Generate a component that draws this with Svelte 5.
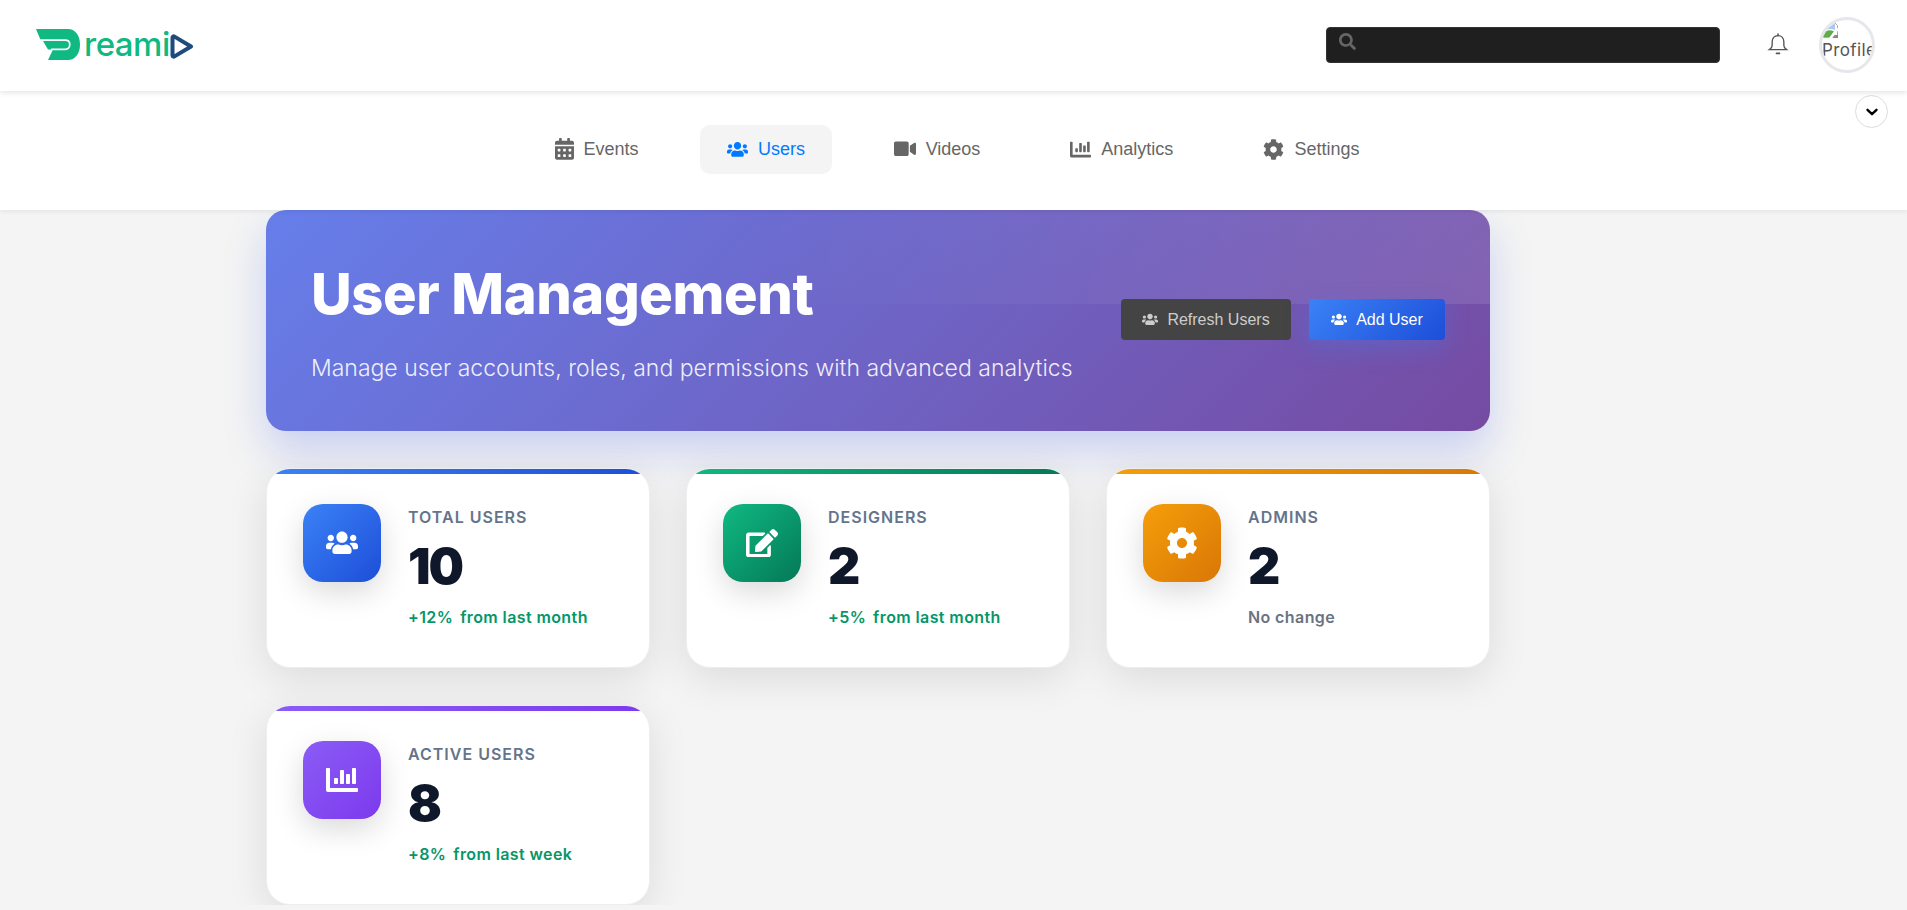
<script>
  const paths = {
    users: "M96 224c35.3 0 64-28.7 64-64s-28.7-64-64-64-64 28.7-64 64 28.7 64 64 64zm448 0c35.3 0 64-28.7 64-64s-28.7-64-64-64-64 28.7-64 64 28.7 64 64 64zm32 32h-64c-17.6 0-33.5 7.1-45.1 18.6 40.3 22.1 68.9 62 75.1 109.4h66c17.7 0 32-14.3 32-32v-32c0-35.3-28.7-64-64-64zm-256 0c61.9 0 112-50.1 112-112S381.9 32 320 32 208 82.1 208 144s50.1 112 112 112zm76.8 32h-8.3c-20.8 10-43.9 16-68.5 16s-47.6-6-68.5-16h-8.3C179.6 288 128 339.6 128 403.2V432c0 26.5 21.5 48 48 48h288c26.5 0 48-21.5 48-48v-28.8c0-63.6-51.6-115.2-115.2-115.2zm-223.7-13.4C161.5 263.1 145.6 256 128 256H64c-35.3 0-64 28.7-64 64v32c0 17.7 14.3 32 32 32h65.9c6.3-47.4 34.9-87.3 75.2-109.4z",
    calendar: "M0 464c0 26.5 21.5 48 48 48h352c26.5 0 48-21.5 48-48V192H0v272zm320-196c0-6.6 5.4-12 12-12h40c6.6 0 12 5.4 12 12v40c0 6.6-5.4 12-12 12h-40c-6.6 0-12-5.4-12-12v-40zm0 128c0-6.6 5.4-12 12-12h40c6.6 0 12 5.4 12 12v40c0 6.6-5.4 12-12 12h-40c-6.6 0-12-5.4-12-12v-40zM192 268c0-6.6 5.4-12 12-12h40c6.6 0 12 5.4 12 12v40c0 6.6-5.4 12-12 12h-40c-6.6 0-12-5.4-12-12v-40zm0 128c0-6.6 5.4-12 12-12h40c6.6 0 12 5.4 12 12v40c0 6.6-5.4 12-12 12h-40c-6.6 0-12-5.4-12-12v-40zM64 268c0-6.6 5.4-12 12-12h40c6.6 0 12 5.4 12 12v40c0 6.6-5.4 12-12 12H76c-6.6 0-12-5.4-12-12v-40zm0 128c0-6.6 5.4-12 12-12h40c6.6 0 12 5.4 12 12v40c0 6.6-5.4 12-12 12H76c-6.6 0-12-5.4-12-12v-40zM400 64h-48V16c0-8.8-7.2-16-16-16h-32c-8.8 0-16 7.2-16 16v48H160V16c0-8.8-7.2-16-16-16h-32c-8.8 0-16 7.2-16 16v48H48C21.5 64 0 85.5 0 112v48h448v-48c0-26.5-21.5-48-48-48z",
    video: "M336.2 64H47.8C21.4 64 0 85.4 0 111.8v288.4C0 426.6 21.4 448 47.8 448h288.4c26.4 0 47.8-21.4 47.8-47.8V111.8c0-26.4-21.4-47.8-47.8-47.8zm189.4 37.7L416 177.3v157.4l109.6 75.5c21.2 14.6 50.4-.3 50.4-25.8V127.5c0-25.4-29.1-40.4-50.4-25.8z",
    chart: "M332.8 320h38.4c6.4 0 12.8-6.4 12.8-12.8V172.8c0-6.4-6.4-12.8-12.8-12.8h-38.4c-6.4 0-12.8 6.4-12.8 12.8v134.4c0 6.4 6.4 12.8 12.8 12.8zm96 0h38.4c6.4 0 12.8-6.4 12.8-12.8V76.8c0-6.4-6.4-12.8-12.8-12.8h-38.4c-6.4 0-12.8 6.4-12.8 12.8v230.4c0 6.4 6.4 12.8 12.8 12.8zm-288 0h38.4c6.4 0 12.8-6.4 12.8-12.8v-70.4c0-6.4-6.4-12.8-12.8-12.8h-38.4c-6.4 0-12.8 6.4-12.8 12.8v70.4c0 6.4 6.4 12.8 12.8 12.8zm96 0h38.4c6.4 0 12.8-6.4 12.8-12.8V108.8c0-6.4-6.4-12.8-12.8-12.8h-38.4c-6.4 0-12.8 6.4-12.8 12.8v198.4c0 6.4 6.4 12.8 12.8 12.8zM496 384H64V80c0-8.84-7.16-16-16-16H16C7.16 64 0 71.16 0 80v336c0 17.67 14.33 32 32 32h464c8.84 0 16-7.16 16-16v-32c0-8.84-7.16-16-16-16z",
    cog: "M487.4 315.7l-42.6-24.6c4.3-23.2 4.3-47 0-70.2l42.6-24.6c4.9-2.8 7.1-8.6 5.5-14-11.1-35.6-30-67.8-54.7-94.6-3.8-4.1-10-5.1-14.8-2.3L380.8 110c-17.9-15.4-38.5-27.3-60.8-35.1V25.8c0-5.6-3.9-10.5-9.4-11.7-36.7-8.2-74.3-7.8-109.2 0-5.5 1.2-9.4 6.1-9.4 11.7V75c-22.2 7.9-42.8 19.8-60.8 35.1L88.7 85.5c-4.9-2.8-11-1.9-14.8 2.3-24.7 26.7-43.6 58.9-54.7 94.6-1.7 5.4.6 11.2 5.5 14L67.3 221c-4.3 23.2-4.3 47 0 70.2l-42.6 24.6c-4.9 2.8-7.1 8.6-5.5 14 11.1 35.6 30 67.8 54.7 94.6 3.8 4.1 10 5.1 14.8 2.3l42.6-24.6c17.9 15.4 38.5 27.3 60.8 35.1v49.2c0 5.6 3.9 10.5 9.4 11.7 36.7 8.2 74.3 7.8 109.2 0 5.5-1.2 9.4-6.1 9.4-11.7v-49.2c22.2-7.9 42.8-19.8 60.8-35.1l42.6 24.6c4.9 2.8 11 1.9 14.8-2.3 24.7-26.7 43.6-58.9 54.7-94.6 1.5-5.5-.7-11.3-5.6-14.1zM256 336c-44.1 0-80-35.9-80-80s35.9-80 80-80 80 35.9 80 80-35.9 80-80 80z",
    edit: "M402.6 83.2l90.2 90.2c3.8 3.8 3.8 10 0 13.8L274.4 405.6l-92.8 10.3c-12.4 1.4-22.9-9.1-21.5-21.5l10.3-92.8L388.8 83.2c3.8-3.8 10-3.8 13.8 0zm162-22.9l-48.8-48.8c-15.2-15.2-39.9-15.2-55.2 0l-35.4 35.4c-3.8 3.8-3.8 10 0 13.8l90.2 90.2c3.8 3.8 10 3.8 13.8 0l35.4-35.4c15.2-15.3 15.2-40 0-55.2zM384 346.2V448H64V128h229.8c3.2 0 6.2-1.3 8.5-3.5l40-40c7.6-7.6 2.2-20.5-8.5-20.5H48C21.5 64 0 85.5 0 112v352c0 26.5 21.5 48 48 48h352c26.5 0 48-21.5 48-48V306.2c0-10.7-12.9-16-20.5-8.5l-40 40c-2.2 2.3-3.5 5.3-3.5 8.5z",
    search: "M505 442.7L405.3 343c-4.5-4.5-10.6-7-17-7H372c27.6-35.3 44-79.7 44-128C416 93.1 322.9 0 208 0S0 93.1 0 208s93.1 208 208 208c48.3 0 92.7-16.4 128-44v16.3c0 6.4 2.5 12.5 7 17l99.7 99.7c9.4 9.4 24.6 9.4 33.9 0l28.3-28.3c9.4-9.4 9.4-24.6.1-34zM208 336c-70.7 0-128-57.2-128-128 0-70.7 57.2-128 128-128 70.7 0 128 57.2 128 128 0 70.7-57.2 128-128 128z"
  };
  const boxes = { users: "0 0 640 512", calendar: "0 0 448 512", video: "0 0 576 512", chart: "0 0 512 512", cog: "0 0 512 512", edit: "0 0 576 512", search: "0 0 512 512" };

  const tabs = [
    { label: "Events", icon: "calendar", w: 19 },
    { label: "Users", icon: "users", w: 21, active: true },
    { label: "Videos", icon: "video", w: 22 },
    { label: "Analytics", icon: "chart", w: 21 },
    { label: "Settings", icon: "cog", w: 21 }
  ];

  const stats = [
    { label: "TOTAL USERS", value: "10", up: "+12%", note: "from last month", icon: "users", tone: "blue" },
    { label: "DESIGNERS", value: "2", up: "+5%", note: "from last month", icon: "edit", tone: "green" },
    { label: "ADMINS", value: "2", note: "No change", icon: "cog", tone: "orange" },
    { label: "ACTIVE USERS", value: "8", up: "+8%", note: "from last week", icon: "chart", tone: "purple" }
  ];
</script>

{#snippet icon(name, width)}
  <svg class="fa" {width} viewBox={boxes[name]} fill="currentColor" aria-hidden="true"><path d={paths[name]} /></svg>
{/snippet}

<header class="topbar">
  <div class="logo">
    <svg class="mark" width="44" height="31" viewBox="0 0 44 31" aria-hidden="true">
      <path fill="#0fb981" d="M0 0H32C39 0 44 6 44 15.500C44 25 39 31 32 31H12L17 20.500H12L7 12H5Z" />
      <path fill="none" stroke="#fff" stroke-width="1.700" d="M3 11.200H29C32.500 11.200 33.800 13.200 33.800 15.500C33.800 18.500 31.500 20.300 29 20.300H15" />
    </svg>
    <span class="logo-text">reami</span>
    <svg class="play" width="24" height="25" viewBox="0 0 24 25" aria-hidden="true">
      <path fill="none" stroke="#1f4a7c" stroke-width="4" stroke-linejoin="round" d="M2.500 3.500C2.500 2.500 3.500 2 4.500 2.600L21 12.500L4.500 22.400C3.500 23 2.500 22.500 2.500 21.500Z" />
    </svg>
  </div>
  <div class="top-right">
    <div class="search">
      <span class="search-icon">{@render icon("search", 17)}</span>
    </div>
    <svg class="bell" width="22" height="23" viewBox="0 0 20 22" fill="none" stroke="#555" stroke-width="1.300" aria-hidden="true">
      <path d="M10 2.500c-3.600 0-5.600 2.600-5.600 6v3.400c0 1.600-1.200 3-2.600 4h16.400c-1.400-1-2.600-2.400-2.600-4V8.500c0-3.400-2-6-5.600-6z" />
      <path d="M10 1v1.500M8.500 19.500h3" stroke-linecap="round" stroke-width="1.500" />
    </svg>
    <div class="avatar">
      <svg class="broken" width="17" height="16" viewBox="0 0 17 16" aria-hidden="true">
        <path fill="#fff" stroke="#a8a8a8" d="M1.500 15V5L7.500 1H13L15.500 3.500V15Z" />
        <path fill="#a9c9ee" d="M1 11V5.500L7.500 1.500H13V8C8.500 6 4 7 1 11Z" />
        <path fill="#62ab4b" d="M1 15.500V12C4 8 8.500 7.500 12 9.500L8 15.500Z" />
        <path fill="#fff" d="M7 16L15 5.500L17 7.500L10 16Z" />
        <path fill="#8a8a8a" d="M12.500 13H16V16H10.500Z" />
      </svg>
      <span class="alt">Profile</span>
    </div>
  </div>
</header>

<nav class="tabs">
  {#each tabs as tab}
    <button class="tab" class:active={tab.active}>
      {@render icon(tab.icon, tab.w)}
      <span>{tab.label}</span>
    </button>
  {/each}
  <button class="collapse" aria-label="Collapse">
    <svg width="14" height="14" viewBox="0 0 14 14" fill="none" stroke="#000" stroke-width="2.400" stroke-linecap="round" stroke-linejoin="round"><path d="M2.500 4.800L7 9.200L11.500 4.800" /></svg>
  </button>
</nav>

<main class="page">
  <section class="hero">
    <div class="hero-copy">
      <h1>User Management</h1>
      <p>Manage user accounts, roles, and permissions with advanced analytics</p>
    </div>
    <div class="hero-actions">
      <button class="btn dark">{@render icon("users", 16)}<span>Refresh Users</span></button>
      <button class="btn primary">{@render icon("users", 16)}<span>Add User</span></button>
    </div>
  </section>

  <section class="stats">
    {#each stats as s}
      <article class="card {s.tone}">
        <div class="card-icon">{@render icon(s.icon, 32)}</div>
        <div class="card-body">
          <div class="card-label">{s.label}</div>
          <div class="card-value">{s.value}</div>
          {#if s.up}
            <div class="card-note up"><span>{s.up}</span><span>{s.note}</span></div>
          {:else}
            <div class="card-note">{s.note}</div>
          {/if}
        </div>
      </article>
    {/each}
  </section>
</main>

<style>
  :global(body) {
    background: #f4f4f4;
    font-family: "Liberation Sans", Arial, sans-serif;
  }
  :global(html), :global(body) {
    overflow: hidden;
  }
  .fa {
    display: block;
    flex: none;
  }
  button {
    font-family: inherit;
    border: none;
    cursor: pointer;
  }

  .topbar {
    position: relative;
    z-index: 2;
    height: 91px;
    box-sizing: border-box;
    background: #fff;
    box-shadow: 0 2px 5px rgba(0, 0, 0, 0.1);
    display: flex;
    align-items: center;
    justify-content: space-between;
    padding: 0 32px 2px 36px;
  }
  .logo {
    display: flex;
    align-items: flex-end;
    height: 31px;
  }
  .logo-text {
    font-family: "Inter", sans-serif;
    font-size: 33px;
    line-height: 31px;
    font-weight: 500;
    color: #0fb981;
    letter-spacing: -0.5px;
    margin-left: 4px;
  }
  .play {
    margin: 0 0 1px 0;
  }
  .top-right {
    display: flex;
    align-items: center;
  }
  .search {
    width: 394px;
    height: 36px;
    box-sizing: border-box;
    background: #1f1f1f;
    border: 1px solid #333;
    border-radius: 4px;
    margin-right: 47px;
    padding: 5px 0 0 12px;
  }
  .search-icon {
    display: block;
    color: #666;
  }
  .bell {
    margin-right: 30px;
  }
  .avatar {
    width: 56px;
    height: 56px;
    box-sizing: border-box;
    border: 3px solid #e5e7eb;
    border-radius: 50%;
    overflow: hidden;
    color: #555;
    font-family: "Inter", sans-serif;
    font-size: 17px;
    line-height: 24px;
    letter-spacing: 0.4px;
    white-space: nowrap;
  }
  .broken {
    display: block;
    margin-top: 2px;
  }
  .alt {
    display: block;
  }

  .tabs {
    position: relative;
    z-index: 1;
    height: 119px;
    box-sizing: border-box;
    background: #fff;
    box-shadow: 0 2px 4px rgba(0, 0, 0, 0.06);
    display: flex;
    align-items: center;
    justify-content: center;
    gap: 36px;
    padding: 0 0 3px 7px;
  }
  .tab {
    height: 49px;
    padding: 0 27px;
    border-radius: 10px;
    background: transparent;
    color: #666;
    font-size: 18px;
    display: flex;
    align-items: center;
    gap: 10px;
  }
  .tab.active {
    margin: 0 -1.500px;
    background: #f4f4f4;
    color: #007bff;
  }
  .collapse {
    position: absolute;
    top: 4px;
    right: 19px;
    width: 33px;
    height: 33px;
    padding: 0;
    border: 1px solid #ddd;
    border-radius: 50%;
    background: #fff;
    display: flex;
    align-items: center;
    justify-content: center;
  }

  .page {
    width: 1224px;
    margin-left: 266px;
  }
  .hero {
    position: relative;
    overflow: hidden;
    height: 221px;
    border-radius: 20px;
    background: linear-gradient(135deg, #667eea 0%, #764ba2 100%);
    box-shadow: 0 20px 40px rgba(102, 126, 234, 0.3);
    display: flex;
    align-items: center;
    justify-content: space-between;
    padding: 0 45px;
    box-sizing: border-box;
  }
  .hero::before {
    content: "";
    position: absolute;
    inset: 0 0 auto 0;
    height: 94px;
    background: linear-gradient(90deg, rgba(255, 255, 255, 0) 40%, rgba(255, 255, 255, 0.1) 100%);
  }
  .hero-copy, .hero-actions {
    position: relative;
  }
  h1 {
    margin: 0 0 22px;
    font-family: "Inter", sans-serif;
    font-size: 56px;
    line-height: 72px;
    font-weight: 800;
    letter-spacing: -0.4px;
    color: #fff;
  }
  .hero-copy p {
    margin: 0;
    font-family: "Inter", sans-serif;
    font-size: 23px;
    line-height: 32px;
    font-weight: 300;
    color: rgba(255, 255, 255, 0.9);
  }
  .hero-actions {
    display: flex;
    gap: 18px;
    margin-bottom: 2px;
  }
  .btn {
    height: 41px;
    border-radius: 4px;
    font-size: 16px;
    display: flex;
    align-items: center;
    justify-content: center;
    gap: 9px;
    padding: 0;
  }
  .btn.dark {
    width: 170px;
    background: #444;
    color: #ccc;
  }
  .btn.primary {
    width: 136px;
    background: linear-gradient(135deg, #3b82f6, #1d4ed8);
    color: #fff;
    box-shadow: 0 8px 24px rgba(59, 130, 246, 0.3);
  }

  .stats {
    margin-top: 37px;
    display: grid;
    grid-template-columns: repeat(3, 1fr);
    gap: 37px 36px;
  }
  .card {
    position: relative;
    overflow: hidden;
    height: 200px;
    box-sizing: border-box;
    background: #fff;
    border: 1px solid #eceef2;
    border-radius: 24px;
    box-shadow: 0 10px 40px rgba(0, 0, 0, 0.1);
    padding: 35px 36px;
    display: flex;
    gap: 27px;
  }
  .card::before {
    content: "";
    position: absolute;
    inset: 0 0 auto 0;
    height: 5px;
    background: var(--tone);
  }
  .blue { --tone: linear-gradient(135deg, #3b82f6, #1d4ed8); }
  .green { --tone: linear-gradient(135deg, #10b981, #047857); }
  .orange { --tone: linear-gradient(135deg, #f59e0b, #d97706); }
  .purple { --tone: linear-gradient(135deg, #8b5cf6, #7c3aed); }
  .card-icon {
    width: 78px;
    height: 78px;
    flex: none;
    border-radius: 20px;
    background: var(--tone);
    color: #fff;
    display: flex;
    align-items: center;
    justify-content: center;
    box-shadow: 0 10px 30px rgba(0, 0, 0, 0.15);
  }
  .card-body {
    font-family: "Inter", sans-serif;
    padding-top: 2px;
  }
  .card-label {
    font-size: 16px;
    line-height: 22px;
    font-weight: 600;
    letter-spacing: 1px;
    color: #64748b;
  }
  .card-value {
    margin-top: 10px;
    font-size: 50px;
    line-height: 56px;
    font-weight: 900;
    letter-spacing: -2px;
    color: #0f172a;
  }
  .card-note {
    margin-top: 11px;
    font-size: 16px;
    line-height: 24px;
    font-weight: 600;
    letter-spacing: 0.4px;
    color: #6b7280;
  }
  .card-note.up {
    color: #059669;
    display: flex;
    gap: 7px;
  }
</style>
